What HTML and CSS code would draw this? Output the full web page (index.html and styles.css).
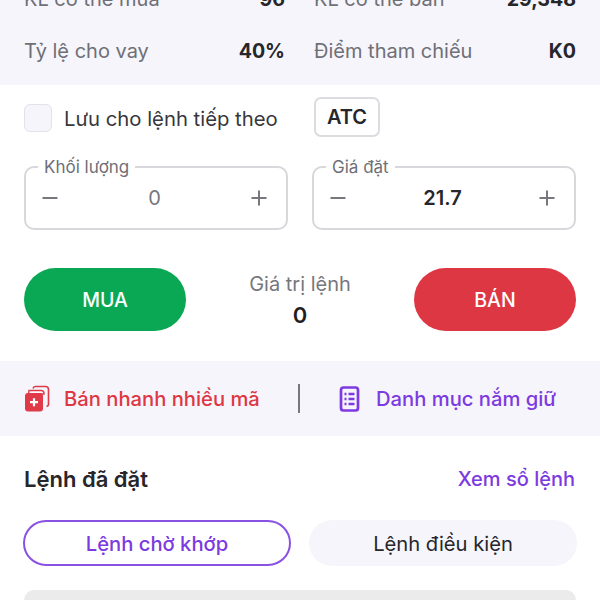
FILE: index.html
```html
<!DOCTYPE html>
<html lang="vi">

<head>
    <meta charset="UTF-8">
    <meta name="viewport" content="width=device-width, initial-scale=1.0">
    <link rel="stylesheet" href="styles.css">
    <title>Đặt lệnh</title>
</head>

<body>
    <div class="page">
        <section class="summary">
            <div class="stat"><span class="stat-label">KL có thể mua</span><span class="stat-value">96</span></div>
            <div class="stat"><span class="stat-label">KL có thể bán</span><span class="stat-value">29,348</span></div>
            <div class="stat"><span class="stat-label">Tỷ lệ cho vay</span><span class="stat-value">40%</span></div>
            <div class="stat"><span class="stat-label">Điểm tham chiếu</span><span class="stat-value">K0</span></div>
        </section>

        <section class="options">
            <label class="save-option"><span class="checkbox"></span>Lưu cho lệnh tiếp theo</label>
            <button class="atc">ATC</button>
        </section>

        <section class="fields">
            <fieldset class="field">
                <legend>Khối lượng</legend>
                <span class="step">
                    <svg viewBox="0 0 16 16"><path d="M0.5 8H15.5" /></svg>
                </span>
                <span class="field-value field-value-empty">0</span>
                <span class="step">
                    <svg viewBox="0 0 16 16"><path d="M0.5 8H15.5M8 0.5V15.5" /></svg>
                </span>
            </fieldset>
            <fieldset class="field">
                <legend>Giá đặt</legend>
                <span class="step">
                    <svg viewBox="0 0 16 16"><path d="M0.5 8H15.5" /></svg>
                </span>
                <span class="field-value">21.7</span>
                <span class="step">
                    <svg viewBox="0 0 16 16"><path d="M0.5 8H15.5M8 0.5V15.5" /></svg>
                </span>
            </fieldset>
        </section>

        <section class="actions">
            <button class="trade trade-buy">MUA</button>
            <div class="order-value">
                <span class="order-value-label">Giá trị lệnh</span>
                <span class="order-value-number">0</span>
            </div>
            <button class="trade trade-sell">BÁN</button>
        </section>

        <section class="shortcuts">
            <a class="shortcut shortcut-red">
                <svg class="shortcut-icon" width="26" height="28" viewBox="0 0 26 28">
                    <path d="M9 3.5A2.5 2.5 0 0 1 11.5 1.5H21.5A3 3 0 0 1 24.5 4.5V19A2.5 2.5 0 0 1 22.5 21.5" fill="none" stroke="#e03a48" stroke-width="1.6" />
                    <path d="M5 5.5H17A3 3 0 0 1 20 8.5V9H4.5A0 0 0 0 1 5 5.5Z" fill="#fff" stroke="#e03a48" stroke-width="1.4" />
                    <rect x="1" y="8" width="18" height="18.5" rx="3" fill="#e03a48" />
                    <path d="M6 17.2H14M10 13.2V21.2" stroke="#fff" stroke-width="2.2" />
                </svg>
                Bán nhanh nhiều mã
            </a>
            <span class="divider"></span>
            <a class="shortcut shortcut-purple">
                <svg class="shortcut-icon" width="22" height="26" viewBox="0 0 22 26">
                    <rect x="2" y="1.5" width="17" height="23" rx="2.5" fill="none" stroke="#7c3ae0" stroke-width="2.7" />
                    <path d="M5.5 8H7.5M9.5 8H15.5M5.5 13H7.5M9.5 13H15.5M5.5 18H7.5M9.5 18H15.5" stroke="#7c3ae0" stroke-width="2.4" />
                </svg>
                Danh mục nắm giữ
            </a>
        </section>

        <section class="orders">
            <div class="orders-head">
                <h2>Lệnh đã đặt</h2>
                <a class="orders-link">Xem sổ lệnh</a>
            </div>
            <div class="tabs">
                <button class="tab tab-active">Lệnh chờ khớp</button>
                <button class="tab">Lệnh điều kiện</button>
            </div>
            <div class="order-card"></div>
        </section>
    </div>
</body>

</html>
```

FILE: styles.css
```css
html,
body {
    margin: 0;
    height: 100%;
    overflow: hidden;
    background: #fff;
}

body {
    font-family: Inter, "Noto Sans", sans-serif;
    color: #26262b;
}

button {
    font-family: inherit;
    padding: 0;
    cursor: pointer;
}

.page {
    width: 600px;
}

/* summary, the first row is cut off by the top of the window */
.summary {
    display: grid;
    grid-template-columns: 261px 262px;
    column-gap: 29px;
    row-gap: 27px;
    height: 109px;
    margin-top: -24px;
    padding: 10px 24px 0;
    box-sizing: border-box;
    align-content: start;
    background: #f5f5fb;
}

.stat {
    display: flex;
    justify-content: space-between;
    align-items: center;
    height: 25px;
    font-size: 20px;
}

.stat-label {
    color: #6f6f76;
}

.stat-value {
    font-size: 19.6px;
    font-weight: 700;
    color: #26262b;
}

.options {
    display: flex;
    align-items: center;
    height: 40px;
    margin-top: 12px;
    padding: 0 24px;
}

.save-option {
    display: flex;
    align-items: center;
    gap: 12px;
    width: 290px;
    margin-top: 2px;
    font-size: 20.3px;
    color: #37373c;
}

.checkbox {
    width: 26px;
    height: 26px;
    border: 1px solid #e2e2ea;
    border-radius: 6px;
    background: #f5f5fb;
}

.atc {
    width: 66px;
    height: 40px;
    border: 2px solid #dcdce0;
    border-radius: 7px;
    background: #fff;
    font-size: 20px;
    font-weight: 600;
    color: #26262b;
}

.fields {
    display: flex;
    justify-content: space-between;
    padding: 0 24px;
    margin-top: 20px;
}

.field {
    display: flex;
    align-items: center;
    justify-content: space-between;
    box-sizing: border-box;
    width: 264px;
    height: 73px;
    margin: 0;
    padding: 0 19px 9px 16px;
    border: 2px solid #d8d8dc;
    border-radius: 10px;
}

.field legend {
    margin-left: -4px;
    padding: 0 6px;
    font-size: 17px;
    line-height: 20px;
    color: #6f6f76;
}

.step {
    display: flex;
}

.step svg {
    width: 16px;
    height: 16px;
    fill: none;
    stroke: #77777d;
    stroke-width: 2;
}

.field-value {
    font-size: 20px;
    font-weight: 600;
    color: #26262b;
}

.field-value-empty {
    font-weight: 400;
    color: #77777d;
}

.actions {
    display: flex;
    justify-content: space-between;
    align-items: center;
    margin-top: 38px;
    padding: 0 24px;
}

.trade {
    width: 162px;
    height: 63px;
    border: none;
    border-radius: 32px;
    font-size: 19.5px;
    font-weight: 500;
    color: #fff;
}

.trade-buy {
    background: #0aa854;
}

.trade-sell {
    background: #de3744;
}

.order-value {
    display: flex;
    flex-direction: column;
    align-items: center;
    gap: 6px;
}

.order-value-label {
    font-size: 20px;
    color: #77777d;
}

.order-value-number {
    font-size: 22px;
    font-weight: 600;
    color: #1f1f23;
}

.shortcuts {
    display: flex;
    align-items: center;
    height: 75px;
    margin-top: 30px;
    padding-left: 24px;
    background: #f5f5fb;
}

.shortcut {
    display: flex;
    align-items: center;
    font-size: 20.2px;
    font-weight: 500;
}

.shortcut-red {
    gap: 14px;
    width: 274px;
    color: #de3744;
}

.shortcut-purple {
    gap: 15px;
    margin-left: 39px;
    color: #7c3ae0;
}

.divider {
    width: 2px;
    height: 29px;
    background: #77777d;
}

.orders {
    padding: 0 24px;
}

.orders-head {
    display: flex;
    justify-content: space-between;
    align-items: center;
    margin-top: 30px;
    padding-right: 1px;
}

.orders-head h2 {
    margin: 0;
    font-size: 22px;
    font-weight: 600;
    color: #26262b;
}

.orders-link {
    font-size: 20px;
    font-weight: 500;
    color: #7c3ae0;
}

.tabs {
    display: flex;
    justify-content: space-between;
    margin: 28px -1px 0;
}

.tab {
    width: 268px;
    height: 46px;
    border: 2px solid #f5f5fb;
    border-radius: 23px;
    background: #f5f5fb;
    font-size: 20.2px;
    color: #26262b;
}

.tab-active {
    border-color: #8a52e4;
    background: #fff;
    color: #7c3ae0;
    font-weight: 500;
}

/* only the top of the next card shows at the bottom of the window */
.order-card {
    height: 10px;
    margin-top: 24px;
    border-radius: 10px 10px 0 0;
    background: #ebebec;
}
```
